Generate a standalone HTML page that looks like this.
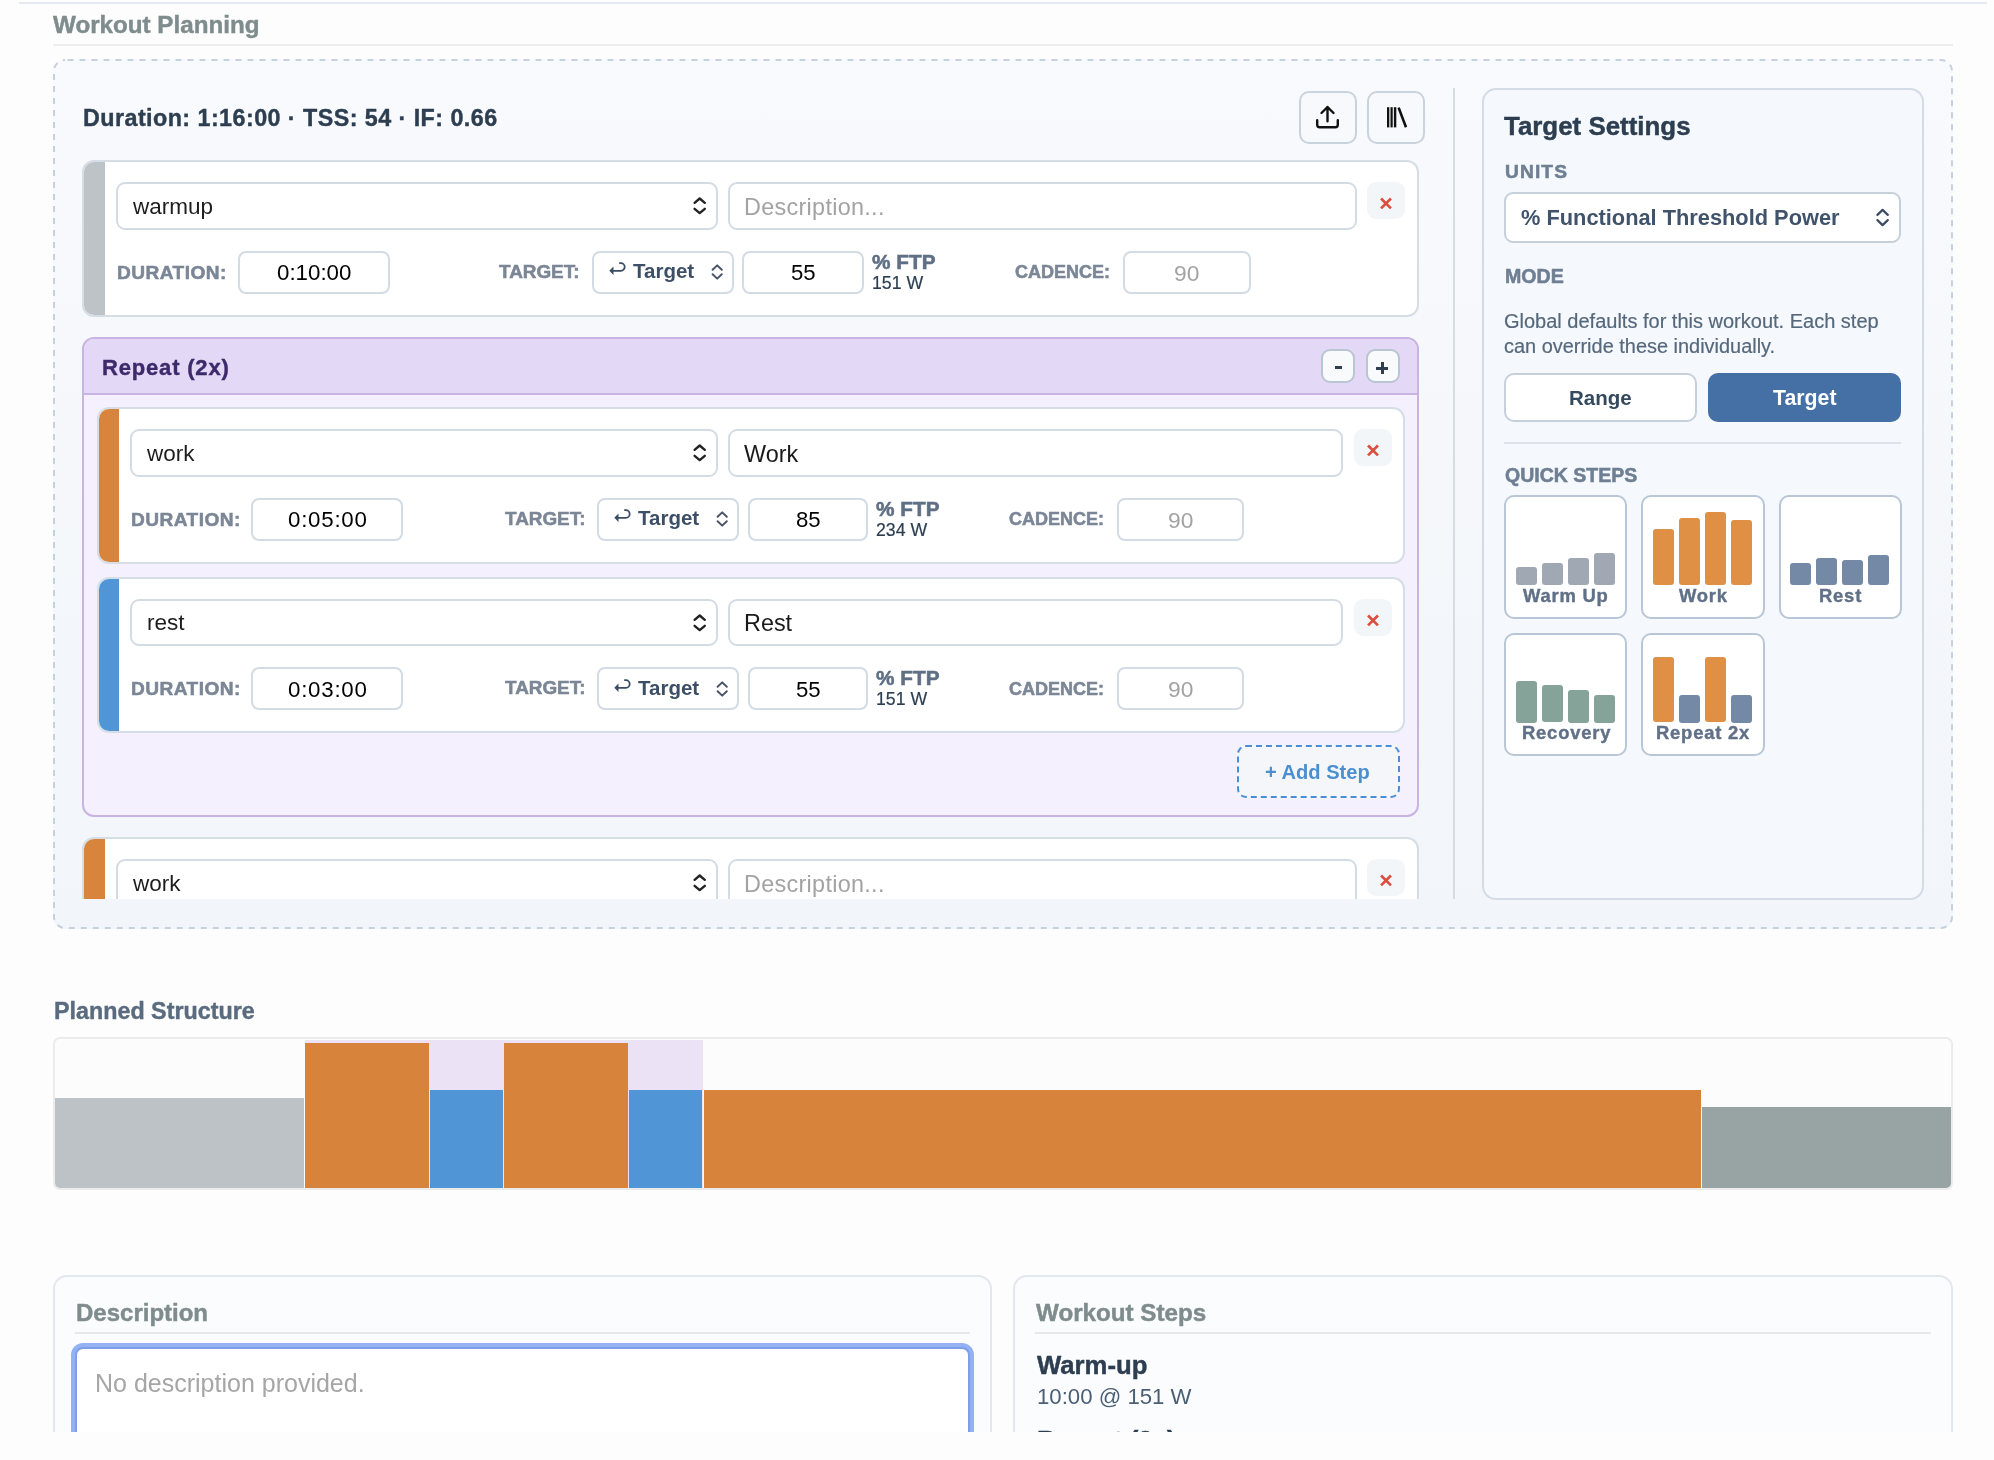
<!DOCTYPE html>
<html><head><meta charset="utf-8"><style>
html,body{margin:0;padding:0;}
body{width:1994px;height:1460px;position:relative;overflow:hidden;background:#fdfdfd;font-family:"Liberation Sans",sans-serif;}
.a{position:absolute;}
.t{position:absolute;white-space:pre;line-height:1;will-change:transform;}
svg.a{overflow:visible}
.card{border:2px solid #d5dde5;border-radius:12px;box-sizing:border-box;background:#fff;overflow:hidden}
.card .bar{position:absolute;left:0;top:0;bottom:0;width:20px}
</style></head><body>
<div class="a " style="left:19px;top:2px;width:1968px;height:2px;background:#e4e9ef"></div>
<div class="t" style="left:53px;top:13.21px;font-size:24.2px;font-weight:700;color:#7f8c8d;-webkit-text-stroke:0.45px #7f8c8d;">Workout Planning</div>
<div class="a " style="left:53px;top:44px;width:1900px;height:2px;background:#ededed"></div>
<div class="a " style="left:53px;top:59px;width:1900px;height:870px;border-radius:12px;background:linear-gradient(#f8fafd,#f2f5f9)"></div>
<svg class="a" style="left:53px;top:59px" width="1900" height="870"><rect x="1" y="1" width="1898" height="868" rx="11" ry="11" fill="none" stroke="#c6d1df" stroke-width="2" stroke-dasharray="6 6" stroke-dashoffset="-2.5"/></svg>
<div class="a" style="left:0;top:88px;width:1440px;height:811px;overflow:hidden"><div class="a" style="left:0;top:-88px;width:1440px;height:1000px">
<div class="t" style="left:83px;top:106.98px;font-size:23.3px;font-weight:700;color:#2c3e50;letter-spacing:0.45px;-webkit-text-stroke:0.4px #2c3e50;">Duration: 1:16:00 · TSS: 54 · IF: 0.66</div>
<div class="a " style="left:1299px;top:91px;width:58px;height:53px;border:2px solid #c9d3de;border-radius:10px;box-sizing:border-box;background:#f7f9fc"></div>
<div class="a " style="left:1367px;top:91px;width:58px;height:53px;border:2px solid #c9d3de;border-radius:10px;box-sizing:border-box;background:#f7f9fc"></div>
<svg class="a" style="left:1310px;top:100px" width="36" height="36" viewBox="1310 100 36 36"><g fill="none" stroke="#111" stroke-width="2.4" stroke-linecap="round" stroke-linejoin="round"><path d="M1321.5,113 L1327.5,107 L1333.5,113 M1327.5,107 V121.2"/><path d="M1317.2,120.2 V124.8 Q1317.2,127.2 1319.6,127.2 H1335.4 Q1337.8,127.2 1337.8,124.8 V120.2"/></g></svg>
<svg class="a" style="left:1380px;top:100px" width="36" height="36" viewBox="1380 100 36 36"><g fill="#111"><rect x="1387" y="107.2" width="2.3" height="20.2"/><rect x="1390.5" y="107.2" width="2.2" height="20.2"/><rect x="1393.9" y="107.2" width="2.4" height="20.2"/></g><path d="M1398.6,107.6 L1406,127.2" stroke="#111" stroke-width="2.6" fill="none"/></svg>
<div class="a card" style="left:82px;top:160px;width:1337px;height:156.5px"><div class="bar" style="background:#bdc3c7;width:21px"></div></div>
<div class="a " style="left:116px;top:182.3px;width:602px;height:47.5px;border:2px solid #d3dbe4;border-radius:9px;box-sizing:border-box;background:#fff"></div>
<div class="t" style="left:132.61px;top:195.95px;font-size:22.5px;font-weight:400;color:#1d1d1d;">warmup</div>
<svg class="a" style="left:688px;top:190px" width="20" height="30" viewBox="688 190 20 30"><path d="M694.6,202.8 L699.7,198.5 L704.8,202.8 M694.6,208.8 L699.7,213.1 L704.8,208.8" fill="none" stroke="#222" stroke-width="2.4" stroke-linecap="round" stroke-linejoin="round"/></svg>
<div class="a " style="left:728px;top:182.3px;width:629px;height:47.5px;border:2px solid #d3dbe4;border-radius:9px;box-sizing:border-box;background:#fff"></div>
<div class="t" style="left:744.3px;top:195.89px;font-size:23.4px;font-weight:400;color:#a3a3a3;letter-spacing:0.3px;">Description...</div>
<div class="a " style="left:1367px;top:182px;width:38px;height:37px;background:#f3f6f9;border-radius:9px"></div>
<svg class="a" style="left:1372px;top:187px" width="28" height="28" viewBox="1372 187 28 28"><path d="M1381.05,198.45 L1390.95,208.35 M1390.95,198.45 L1381.05,208.35" stroke="#d9503f" stroke-width="2.7" fill="none"/></svg>
<div class="t" style="left:116.5px;top:262.53px;font-size:19.1px;font-weight:700;color:#7b8696;letter-spacing:0.45px;-webkit-text-stroke:0.55px #7b8696;">DURATION:</div>
<div class="a " style="left:238px;top:250.5px;width:152px;height:43px;border:2px solid #d3dbe4;border-radius:8px;box-sizing:border-box;background:#fff"></div>
<div class="t" style="left:276.79px;top:262.12px;font-size:22.3px;font-weight:400;color:#000;">0:10:00</div>
<div class="t" style="left:499px;top:262.5px;font-size:18.9px;font-weight:700;color:#7b8696;-webkit-text-stroke:0.55px #7b8696;">TARGET:</div>
<div class="a " style="left:592px;top:250.5px;width:142px;height:43px;border:2px solid #d3dbe4;border-radius:8px;box-sizing:border-box;background:#fff"></div>
<svg class="a" style="left:605.5px;top:258px" width="24" height="22" viewBox="605.5 258 24 22"><path d="M618.7,263.2 H620.4 A3.8,3.8 0 0 1 620.4,270.8 H612" fill="none" stroke="#3b4c63" stroke-width="1.8"/><path d="M608.8,270.8 L613,266.5 L613,275.1 Z" fill="#3b4c63"/></svg>
<div class="t" style="left:633.4px;top:261.15px;font-size:20.5px;font-weight:700;color:#3d4f66;">Target</div>
<svg class="a" style="left:706px;top:260px" width="20" height="24" viewBox="706 260 20 24"><path d="M712.6,269.8 L717.2,265.4 L721.8,269.8 M712.6,274.2 L717.2,278.6 L721.8,274.2" fill="none" stroke="#4a5568" stroke-width="2" stroke-linecap="round" stroke-linejoin="round"/></svg>
<div class="a " style="left:742px;top:250.5px;width:122px;height:43px;border:2px solid #d3dbe4;border-radius:8px;box-sizing:border-box;background:#fff"></div>
<div class="t" style="left:790.65px;top:262.21px;font-size:22.2px;font-weight:400;color:#000;">55</div>
<div class="t" style="left:871.5px;top:251.99px;font-size:20.8px;font-weight:700;color:#5f6f84;-webkit-text-stroke:0.55px #5f6f84;">% FTP</div>
<div class="t" style="left:872px;top:274.62px;font-size:17.7px;font-weight:400;color:#2c3e50;-webkit-text-stroke:0.2px #2c3e50;">151 W</div>
<div class="t" style="left:1015px;top:263.26px;font-size:18px;font-weight:700;color:#7b8696;-webkit-text-stroke:0.55px #7b8696;">CADENCE:</div>
<div class="a " style="left:1122.5px;top:250.5px;width:128px;height:43px;border:2px solid #d3dbe4;border-radius:8px;box-sizing:border-box;background:#fff"></div>
<div class="t" style="left:1174.32px;top:261.7px;font-size:22.8px;font-weight:400;color:#a3a3a3;">90</div>
<div class="a" style="left:82px;top:337px;width:1337px;height:480px;border:2px solid #c9b3e3;border-radius:12px;box-sizing:border-box;background:#f4f0fd;overflow:hidden"><div style="height:54px;border-bottom:2px solid #c9b3e3;background:#e3d8f5"></div></div>
<div class="t" style="left:102px;top:357.18px;font-size:22px;font-weight:700;color:#3d2a6b;letter-spacing:0.82px;-webkit-text-stroke:0.4px #3d2a6b;">Repeat (2x)</div>
<div class="a " style="left:1321px;top:349px;width:33.5px;height:33.5px;border:2px solid #b9c5d0;border-radius:9px;box-sizing:border-box;background:#f9fafc"></div>
<div class="a " style="left:1334.5px;top:366.1px;width:7.3px;height:3.1px;background:#2c3e50"></div>
<div class="a " style="left:1366px;top:349px;width:33.5px;height:33.5px;border:2px solid #b9c5d0;border-radius:9px;box-sizing:border-box;background:#f9fafc"></div>
<div class="a " style="left:1376.3px;top:366.5px;width:11.7px;height:3px;background:#2c3e50"></div>
<div class="a " style="left:1380.7px;top:362.3px;width:3px;height:11.4px;background:#2c3e50"></div>
<div class="a card" style="left:96.5px;top:407px;width:1308px;height:156.5px"><div class="bar" style="background:#d9843c;width:20px"></div></div>
<div class="a " style="left:130px;top:429.3px;width:587.5px;height:47.5px;border:2px solid #d3dbe4;border-radius:9px;box-sizing:border-box;background:#fff"></div>
<div class="t" style="left:146.61px;top:442.95px;font-size:22.5px;font-weight:400;color:#1d1d1d;">work</div>
<svg class="a" style="left:687.5px;top:437px" width="20" height="30" viewBox="687.5 437 20 30"><path d="M694.1,449.8 L699.2,445.5 L704.3,449.8 M694.1,455.8 L699.2,460.1 L704.3,455.8" fill="none" stroke="#222" stroke-width="2.4" stroke-linecap="round" stroke-linejoin="round"/></svg>
<div class="a " style="left:728px;top:429.3px;width:614.5px;height:47.5px;border:2px solid #d3dbe4;border-radius:9px;box-sizing:border-box;background:#fff"></div>
<div class="t" style="left:744px;top:442.89px;font-size:23.4px;font-weight:400;color:#1a1a1a;">Work</div>
<div class="a " style="left:1354px;top:429px;width:38px;height:37px;background:#f3f6f9;border-radius:9px"></div>
<svg class="a" style="left:1359px;top:434px" width="28" height="28" viewBox="1359 434 28 28"><path d="M1368.05,445.45 L1377.95,455.35 M1377.95,445.45 L1368.05,455.35" stroke="#d9503f" stroke-width="2.7" fill="none"/></svg>
<div class="t" style="left:130.6px;top:509.53px;font-size:19.1px;font-weight:700;color:#7b8696;letter-spacing:0.45px;-webkit-text-stroke:0.55px #7b8696;">DURATION:</div>
<div class="a " style="left:251.3px;top:497.5px;width:152px;height:43px;border:2px solid #d3dbe4;border-radius:8px;box-sizing:border-box;background:#fff"></div>
<div class="t" style="left:287.84px;top:509.12px;font-size:22.3px;font-weight:400;color:#000;letter-spacing:0.75px;">0:05:00</div>
<div class="t" style="left:505px;top:509.5px;font-size:18.9px;font-weight:700;color:#7b8696;-webkit-text-stroke:0.55px #7b8696;">TARGET:</div>
<div class="a " style="left:597px;top:497.5px;width:142.3px;height:43px;border:2px solid #d3dbe4;border-radius:8px;box-sizing:border-box;background:#fff"></div>
<svg class="a" style="left:610.5px;top:505px" width="24" height="22" viewBox="610.5 505 24 22"><path d="M623.7,510.2 H625.4 A3.8,3.8 0 0 1 625.4,517.8 H617" fill="none" stroke="#3b4c63" stroke-width="1.8"/><path d="M613.8,517.8 L618,513.5 L618,522.1 Z" fill="#3b4c63"/></svg>
<div class="t" style="left:638.4px;top:508.15px;font-size:20.5px;font-weight:700;color:#3d4f66;">Target</div>
<svg class="a" style="left:711.3px;top:507px" width="20" height="24" viewBox="711.3 507 20 24"><path d="M717.9,516.8 L722.5,512.4 L727.1,516.8 M717.9,521.2 L722.5,525.6 L727.1,521.2" fill="none" stroke="#4a5568" stroke-width="2" stroke-linecap="round" stroke-linejoin="round"/></svg>
<div class="a " style="left:747.7px;top:497.5px;width:120.6px;height:43px;border:2px solid #d3dbe4;border-radius:8px;box-sizing:border-box;background:#fff"></div>
<div class="t" style="left:795.65px;top:509.21px;font-size:22.2px;font-weight:400;color:#000;">85</div>
<div class="t" style="left:875.8px;top:498.99px;font-size:20.8px;font-weight:700;color:#5f6f84;-webkit-text-stroke:0.55px #5f6f84;">% FTP</div>
<div class="t" style="left:876.3px;top:521.62px;font-size:17.7px;font-weight:400;color:#2c3e50;-webkit-text-stroke:0.2px #2c3e50;">234 W</div>
<div class="t" style="left:1009.2px;top:510.26px;font-size:18px;font-weight:700;color:#7b8696;-webkit-text-stroke:0.55px #7b8696;">CADENCE:</div>
<div class="a " style="left:1116.6px;top:497.5px;width:127.9px;height:43px;border:2px solid #d3dbe4;border-radius:8px;box-sizing:border-box;background:#fff"></div>
<div class="t" style="left:1168.37px;top:508.7px;font-size:22.8px;font-weight:400;color:#a3a3a3;">90</div>
<div class="a card" style="left:96.5px;top:576.5px;width:1308px;height:156.5px"><div class="bar" style="background:#5096d6;width:20px"></div></div>
<div class="a " style="left:130px;top:598.8px;width:587.5px;height:47.5px;border:2px solid #d3dbe4;border-radius:9px;box-sizing:border-box;background:#fff"></div>
<div class="t" style="left:146.5px;top:612.45px;font-size:22.5px;font-weight:400;color:#1d1d1d;">rest</div>
<svg class="a" style="left:687.5px;top:606.5px" width="20" height="30" viewBox="687.5 606.5 20 30"><path d="M694.1,619.3 L699.2,615 L704.3,619.3 M694.1,625.3 L699.2,629.6 L704.3,625.3" fill="none" stroke="#222" stroke-width="2.4" stroke-linecap="round" stroke-linejoin="round"/></svg>
<div class="a " style="left:728px;top:598.8px;width:614.5px;height:47.5px;border:2px solid #d3dbe4;border-radius:9px;box-sizing:border-box;background:#fff"></div>
<div class="t" style="left:744px;top:612.39px;font-size:23.4px;font-weight:400;color:#1a1a1a;">Rest</div>
<div class="a " style="left:1354px;top:598.5px;width:38px;height:37px;background:#f3f6f9;border-radius:9px"></div>
<svg class="a" style="left:1359px;top:603.5px" width="28" height="28" viewBox="1359 603.5 28 28"><path d="M1368.05,614.95 L1377.95,624.85 M1377.95,614.95 L1368.05,624.85" stroke="#d9503f" stroke-width="2.7" fill="none"/></svg>
<div class="t" style="left:130.6px;top:679.03px;font-size:19.1px;font-weight:700;color:#7b8696;letter-spacing:0.45px;-webkit-text-stroke:0.55px #7b8696;">DURATION:</div>
<div class="a " style="left:251.3px;top:667px;width:152px;height:43px;border:2px solid #d3dbe4;border-radius:8px;box-sizing:border-box;background:#fff"></div>
<div class="t" style="left:287.84px;top:678.62px;font-size:22.3px;font-weight:400;color:#000;letter-spacing:0.75px;">0:03:00</div>
<div class="t" style="left:505px;top:679px;font-size:18.9px;font-weight:700;color:#7b8696;-webkit-text-stroke:0.55px #7b8696;">TARGET:</div>
<div class="a " style="left:597px;top:667px;width:142.3px;height:43px;border:2px solid #d3dbe4;border-radius:8px;box-sizing:border-box;background:#fff"></div>
<svg class="a" style="left:610.5px;top:674.5px" width="24" height="22" viewBox="610.5 674.5 24 22"><path d="M623.7,679.7 H625.4 A3.8,3.8 0 0 1 625.4,687.3 H617" fill="none" stroke="#3b4c63" stroke-width="1.8"/><path d="M613.8,687.3 L618,683 L618,691.6 Z" fill="#3b4c63"/></svg>
<div class="t" style="left:638.4px;top:677.65px;font-size:20.5px;font-weight:700;color:#3d4f66;">Target</div>
<svg class="a" style="left:711.3px;top:676.5px" width="20" height="24" viewBox="711.3 676.5 20 24"><path d="M717.9,686.3 L722.5,681.9 L727.1,686.3 M717.9,690.7 L722.5,695.1 L727.1,690.7" fill="none" stroke="#4a5568" stroke-width="2" stroke-linecap="round" stroke-linejoin="round"/></svg>
<div class="a " style="left:747.7px;top:667px;width:120.6px;height:43px;border:2px solid #d3dbe4;border-radius:8px;box-sizing:border-box;background:#fff"></div>
<div class="t" style="left:795.65px;top:678.71px;font-size:22.2px;font-weight:400;color:#000;">55</div>
<div class="t" style="left:875.8px;top:668.49px;font-size:20.8px;font-weight:700;color:#5f6f84;-webkit-text-stroke:0.55px #5f6f84;">% FTP</div>
<div class="t" style="left:876.3px;top:691.12px;font-size:17.7px;font-weight:400;color:#2c3e50;-webkit-text-stroke:0.2px #2c3e50;">151 W</div>
<div class="t" style="left:1009.2px;top:679.76px;font-size:18px;font-weight:700;color:#7b8696;-webkit-text-stroke:0.55px #7b8696;">CADENCE:</div>
<div class="a " style="left:1116.6px;top:667px;width:127.9px;height:43px;border:2px solid #d3dbe4;border-radius:8px;box-sizing:border-box;background:#fff"></div>
<div class="t" style="left:1168.37px;top:678.2px;font-size:22.8px;font-weight:400;color:#a3a3a3;">90</div>
<div class="a " style="left:1237px;top:745px;width:163px;height:53px;border:2px dashed #4a8fd6;border-radius:9px;box-sizing:border-box;background:#f4f6fa"></div>
<div class="t" style="left:1265.41px;top:762.09px;font-size:20.1px;font-weight:700;color:#4a8fd0;">+ Add Step</div>
<div class="a card" style="left:82px;top:837px;width:1337px;height:156.5px"><div class="bar" style="background:#d9843c;width:21px"></div></div>
<div class="a " style="left:116px;top:859.3px;width:602px;height:47.5px;border:2px solid #d3dbe4;border-radius:9px;box-sizing:border-box;background:#fff"></div>
<div class="t" style="left:132.61px;top:872.95px;font-size:22.5px;font-weight:400;color:#1d1d1d;">work</div>
<svg class="a" style="left:688px;top:867px" width="20" height="30" viewBox="688 867 20 30"><path d="M694.6,879.8 L699.7,875.5 L704.8,879.8 M694.6,885.8 L699.7,890.1 L704.8,885.8" fill="none" stroke="#222" stroke-width="2.4" stroke-linecap="round" stroke-linejoin="round"/></svg>
<div class="a " style="left:728px;top:859.3px;width:629px;height:47.5px;border:2px solid #d3dbe4;border-radius:9px;box-sizing:border-box;background:#fff"></div>
<div class="t" style="left:744.3px;top:872.89px;font-size:23.4px;font-weight:400;color:#a3a3a3;letter-spacing:0.3px;">Description...</div>
<div class="a " style="left:1367px;top:859px;width:38px;height:37px;background:#f3f6f9;border-radius:9px"></div>
<svg class="a" style="left:1372px;top:864px" width="28" height="28" viewBox="1372 864 28 28"><path d="M1381.05,875.45 L1390.95,885.35 M1390.95,875.45 L1381.05,885.35" stroke="#d9503f" stroke-width="2.7" fill="none"/></svg>
<div class="t" style="left:116.5px;top:939.53px;font-size:19.1px;font-weight:700;color:#7b8696;letter-spacing:0.45px;-webkit-text-stroke:0.55px #7b8696;">DURATION:</div>
<div class="a " style="left:238px;top:927.5px;width:152px;height:43px;border:2px solid #d3dbe4;border-radius:8px;box-sizing:border-box;background:#fff"></div>
<div class="t" style="left:276.79px;top:939.12px;font-size:22.3px;font-weight:400;color:#000;">0:10:00</div>
<div class="t" style="left:499px;top:939.5px;font-size:18.9px;font-weight:700;color:#7b8696;-webkit-text-stroke:0.55px #7b8696;">TARGET:</div>
<div class="a " style="left:592px;top:927.5px;width:142px;height:43px;border:2px solid #d3dbe4;border-radius:8px;box-sizing:border-box;background:#fff"></div>
<svg class="a" style="left:605.5px;top:935px" width="24" height="22" viewBox="605.5 935 24 22"><path d="M618.7,940.2 H620.4 A3.8,3.8 0 0 1 620.4,947.8 H612" fill="none" stroke="#3b4c63" stroke-width="1.8"/><path d="M608.8,947.8 L613,943.5 L613,952.1 Z" fill="#3b4c63"/></svg>
<div class="t" style="left:633.4px;top:938.15px;font-size:20.5px;font-weight:700;color:#3d4f66;">Target</div>
<svg class="a" style="left:706px;top:937px" width="20" height="24" viewBox="706 937 20 24"><path d="M712.6,946.8 L717.2,942.4 L721.8,946.8 M712.6,951.2 L717.2,955.6 L721.8,951.2" fill="none" stroke="#4a5568" stroke-width="2" stroke-linecap="round" stroke-linejoin="round"/></svg>
<div class="a " style="left:742px;top:927.5px;width:122px;height:43px;border:2px solid #d3dbe4;border-radius:8px;box-sizing:border-box;background:#fff"></div>
<div class="t" style="left:790.65px;top:939.21px;font-size:22.2px;font-weight:400;color:#000;">55</div>
<div class="t" style="left:871.5px;top:928.99px;font-size:20.8px;font-weight:700;color:#5f6f84;-webkit-text-stroke:0.55px #5f6f84;">% FTP</div>
<div class="t" style="left:872px;top:951.62px;font-size:17.7px;font-weight:400;color:#2c3e50;-webkit-text-stroke:0.2px #2c3e50;">151 W</div>
<div class="t" style="left:1015px;top:940.26px;font-size:18px;font-weight:700;color:#7b8696;-webkit-text-stroke:0.55px #7b8696;">CADENCE:</div>
<div class="a " style="left:1122.5px;top:927.5px;width:128px;height:43px;border:2px solid #d3dbe4;border-radius:8px;box-sizing:border-box;background:#fff"></div>
<div class="t" style="left:1174.32px;top:938.7px;font-size:22.8px;font-weight:400;color:#a3a3a3;">90</div>
</div></div>
<div class="a " style="left:1453px;top:88px;width:2px;height:811px;background:#d5dce4"></div>
<div class="a " style="left:1482px;top:88px;width:442px;height:812px;border:2px solid #d3dce6;border-radius:14px;box-sizing:border-box;background:#f5f8fc"></div>
<div class="t" style="left:1504px;top:113.58px;font-size:25.9px;font-weight:700;color:#2c3e50;-webkit-text-stroke:0.45px #2c3e50;">Target Settings</div>
<div class="t" style="left:1504.6px;top:162.05px;font-size:19.2px;font-weight:700;color:#6f7f93;letter-spacing:1.1px;-webkit-text-stroke:0.55px #6f7f93;">UNITS</div>
<div class="a " style="left:1504px;top:192px;width:397px;height:51px;border:2px solid #c5d0dc;border-radius:9px;box-sizing:border-box;background:#fff"></div>
<div class="t" style="left:1520.7px;top:206.95px;font-size:21.8px;font-weight:700;color:#40536b;">% Functional Threshold Power</div>
<svg class="a" style="left:1870px;top:200px" width="26" height="32" viewBox="1870 200 26 32"><path d="M1877.4,214.9 L1882.6,209.9 L1887.8,214.9 M1877.4,220.1 L1882.6,225.1 L1887.8,220.1" fill="none" stroke="#3b4c63" stroke-width="2.2" stroke-linecap="round" stroke-linejoin="round"/></svg>
<div class="t" style="left:1504.7px;top:267.01px;font-size:19.6px;font-weight:700;color:#6f7f93;-webkit-text-stroke:0.55px #6f7f93;">MODE</div>
<div class="t" style="left:1504px;top:311.37px;font-size:20px;font-weight:400;color:#56687c;-webkit-text-stroke:0.2px #56687c;">Global defaults for this workout. Each step</div>
<div class="t" style="left:1504px;top:336.91px;font-size:19.95px;font-weight:400;color:#56687c;-webkit-text-stroke:0.2px #56687c;">can override these individually.</div>
<div class="a " style="left:1504px;top:373px;width:193px;height:49px;border:2px solid #c5d0dc;border-radius:10px;box-sizing:border-box;background:#fff"></div>
<div class="t" style="left:1569.36px;top:388.35px;font-size:20.5px;font-weight:700;color:#34495e;">Range</div>
<div class="a " style="left:1708px;top:373px;width:193px;height:49px;border-radius:10px;background:#4470a6"></div>
<div class="t" style="left:1772.74px;top:387.67px;font-size:21.3px;font-weight:700;color:#fff;">Target</div>
<div class="a " style="left:1504px;top:441.5px;width:397px;height:2px;background:#dde3ea"></div>
<div class="t" style="left:1504.7px;top:465.59px;font-size:19.5px;font-weight:700;color:#6f7f93;-webkit-text-stroke:0.55px #6f7f93;">QUICK STEPS</div>
<div class="a " style="left:1504.2px;top:495.3px;width:123.3px;height:123.3px;border:2px solid #b8c6d6;border-radius:10px;box-sizing:border-box;background:#fff"></div>
<div class="a " style="left:1515.7px;top:566.8px;width:21px;height:18.5px;background:#a0a8b3;border-radius:3px"></div>
<div class="a " style="left:1541.8px;top:562.9px;width:21px;height:22.4px;background:#a0a8b3;border-radius:3px"></div>
<div class="a " style="left:1567.9px;top:558px;width:21px;height:27.3px;background:#a0a8b3;border-radius:3px"></div>
<div class="a " style="left:1594px;top:553px;width:21px;height:32.3px;background:#a0a8b3;border-radius:3px"></div>
<div class="t" style="left:1523.36px;top:586.82px;font-size:18.4px;font-weight:700;color:#607087;letter-spacing:0.8px;-webkit-text-stroke:0.4px #607087;">Warm Up</div>
<div class="a " style="left:1641.3px;top:495.3px;width:123.3px;height:123.3px;border:2px solid #b8c6d6;border-radius:10px;box-sizing:border-box;background:#fff"></div>
<div class="a " style="left:1652.8px;top:529px;width:21px;height:56.3px;background:#e09045;border-radius:3px"></div>
<div class="a " style="left:1678.9px;top:518.2px;width:21px;height:67.1px;background:#e09045;border-radius:3px"></div>
<div class="a " style="left:1705px;top:512px;width:21px;height:73.3px;background:#e09045;border-radius:3px"></div>
<div class="a " style="left:1731.1px;top:520.2px;width:21px;height:65.1px;background:#e09045;border-radius:3px"></div>
<div class="t" style="left:1678.86px;top:586.82px;font-size:18.4px;font-weight:700;color:#607087;letter-spacing:0.8px;-webkit-text-stroke:0.4px #607087;">Work</div>
<div class="a " style="left:1778.5px;top:495.3px;width:123.3px;height:123.3px;border:2px solid #b8c6d6;border-radius:10px;box-sizing:border-box;background:#fff"></div>
<div class="a " style="left:1790px;top:562.9px;width:21px;height:22.4px;background:#7489a6;border-radius:3px"></div>
<div class="a " style="left:1816.1px;top:558px;width:21px;height:27.3px;background:#7489a6;border-radius:3px"></div>
<div class="a " style="left:1842.2px;top:560.3px;width:21px;height:25px;background:#7489a6;border-radius:3px"></div>
<div class="a " style="left:1868.3px;top:555px;width:21px;height:30.3px;background:#7489a6;border-radius:3px"></div>
<div class="t" style="left:1818.96px;top:586.82px;font-size:18.4px;font-weight:700;color:#607087;letter-spacing:0.8px;-webkit-text-stroke:0.4px #607087;">Rest</div>
<div class="a " style="left:1504.2px;top:632.5px;width:123.3px;height:123.3px;border:2px solid #b8c6d6;border-radius:10px;box-sizing:border-box;background:#fff"></div>
<div class="a " style="left:1515.7px;top:681px;width:21px;height:41.5px;background:#86a39a;border-radius:3px"></div>
<div class="a " style="left:1541.8px;top:685.2px;width:21px;height:37.3px;background:#86a39a;border-radius:3px"></div>
<div class="a " style="left:1567.9px;top:690px;width:21px;height:32.5px;background:#86a39a;border-radius:3px"></div>
<div class="a " style="left:1594px;top:695px;width:21px;height:27.5px;background:#86a39a;border-radius:3px"></div>
<div class="t" style="left:1521.58px;top:724.02px;font-size:18.4px;font-weight:700;color:#607087;letter-spacing:0.8px;-webkit-text-stroke:0.4px #607087;">Recovery</div>
<div class="a " style="left:1641.3px;top:632.5px;width:123.3px;height:123.3px;border:2px solid #b8c6d6;border-radius:10px;box-sizing:border-box;background:#fff"></div>
<div class="a " style="left:1652.8px;top:657.2px;width:21px;height:65.3px;background:#e09045;border-radius:3px"></div>
<div class="a " style="left:1678.9px;top:695px;width:21px;height:27.5px;background:#7489a6;border-radius:3px"></div>
<div class="a " style="left:1705px;top:657.2px;width:21px;height:65.3px;background:#e09045;border-radius:3px"></div>
<div class="a " style="left:1731.1px;top:695px;width:21px;height:27.5px;background:#7489a6;border-radius:3px"></div>
<div class="t" style="left:1656.23px;top:724.02px;font-size:18.4px;font-weight:700;color:#607087;letter-spacing:0.8px;-webkit-text-stroke:0.4px #607087;">Repeat 2x</div>
<div class="t" style="left:53.7px;top:1000.18px;font-size:23.3px;font-weight:700;color:#5a6b7f;-webkit-text-stroke:0.4px #5a6b7f;">Planned Structure</div>
<div class="a" style="left:53px;top:1037px;width:1900px;height:153px;border:2px solid #ebebeb;border-radius:7px;box-sizing:border-box;background:#fcfcfc;overflow:hidden"><div class="a" style="left:-55.5px;top:-1039px;width:2000px;height:1200px">
<div class="a " style="left:55.5px;top:1098px;width:248.5px;height:92px;background:#bdc2c6"></div>
<div class="a " style="left:305px;top:1040px;width:398.4px;height:150px;background:#ebe3f5"></div>
<div class="a " style="left:305px;top:1043px;width:124px;height:147px;background:#d8833c"></div>
<div class="a " style="left:430px;top:1089.5px;width:73.3px;height:100.5px;background:#5096d6"></div>
<div class="a " style="left:504.3px;top:1043px;width:124.1px;height:147px;background:#d8833c"></div>
<div class="a " style="left:629.4px;top:1089.5px;width:73.6px;height:100.5px;background:#5096d6"></div>
<div class="a " style="left:704px;top:1089.5px;width:997px;height:100.5px;background:#d8833c"></div>
<div class="a " style="left:1702px;top:1106.6px;width:251px;height:83.4px;background:#98a3a4"></div>
</div></div>
<div class="a" style="left:0;top:0;width:1994px;height:1432px;overflow:hidden;pointer-events:none">
<div class="a " style="left:53px;top:1275px;width:939px;height:400px;border:2px solid #e3e8ee;border-radius:14px;box-sizing:border-box;background:#fbfcfe"></div>
<div class="t" style="left:75.9px;top:1301.38px;font-size:24px;font-weight:700;color:#7f8c8d;-webkit-text-stroke:0.45px #7f8c8d;">Description</div>
<div class="a " style="left:75px;top:1332px;width:895px;height:2px;background:#e8e8e8"></div>
<div class="a " style="left:71px;top:1343px;width:903px;height:200px;border:4px solid #94b2f3;border-radius:12px;box-sizing:border-box;background:#94b2f3"></div>
<div class="a " style="left:75px;top:1347px;width:895px;height:200px;border:2px solid #7d9ee8;border-radius:8px;box-sizing:border-box;background:#fff"></div>
<div class="t" style="left:94.5px;top:1371.04px;font-size:25px;font-weight:400;color:#a6a6a6;">No description provided.</div>
<div class="a " style="left:1013px;top:1275px;width:940px;height:400px;border:2px solid #e3e8ee;border-radius:14px;box-sizing:border-box;background:#fbfcfe"></div>
<div class="t" style="left:1035.6px;top:1301.21px;font-size:24.2px;font-weight:700;color:#7f8c8d;-webkit-text-stroke:0.45px #7f8c8d;">Workout Steps</div>
<div class="a " style="left:1035px;top:1332px;width:896px;height:2px;background:#e8e8e8"></div>
<div class="t" style="left:1036.5px;top:1353.14px;font-size:25.7px;font-weight:700;color:#2c3e50;-webkit-text-stroke:0.45px #2c3e50;">Warm-up</div>
<div class="t" style="left:1037px;top:1385.81px;font-size:22.2px;font-weight:400;color:#4a5f73;">10:00 @ 151 W</div>
<div class="t" style="left:1036.5px;top:1428.44px;font-size:25.7px;font-weight:700;color:#2c3e50;-webkit-text-stroke:0.45px #2c3e50;">Repeat (2x)</div>
</div>
</body></html>
